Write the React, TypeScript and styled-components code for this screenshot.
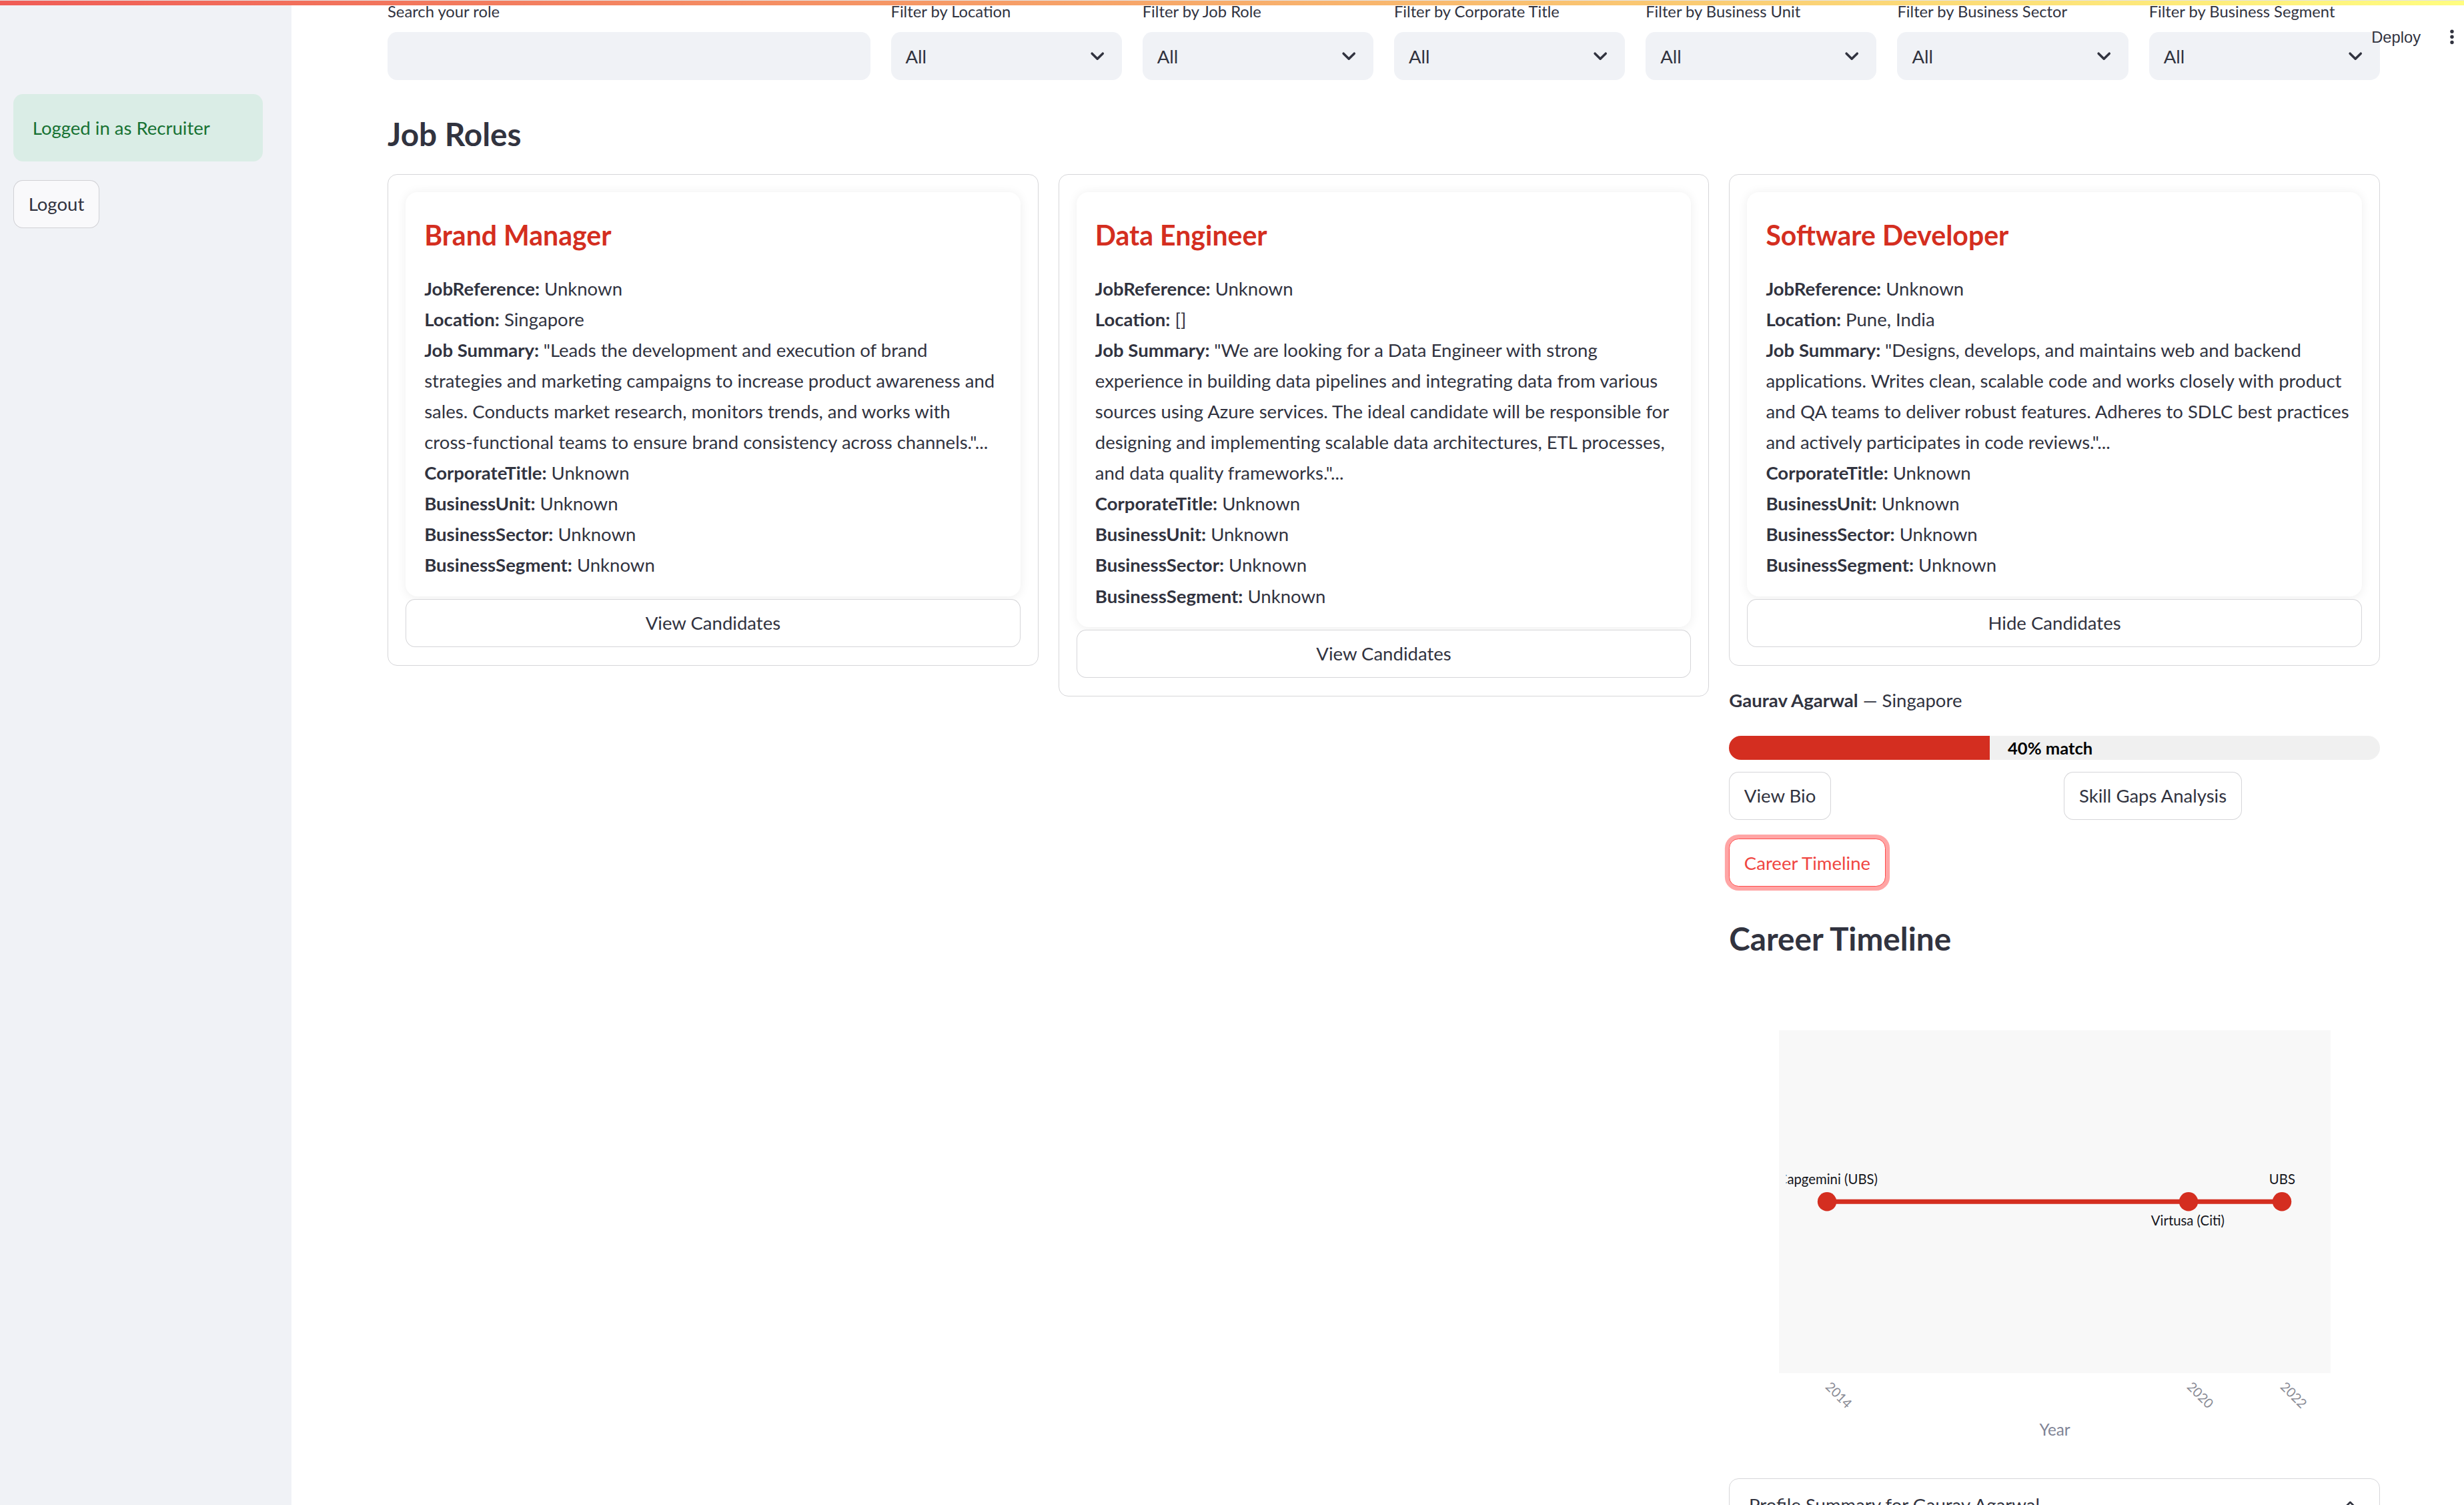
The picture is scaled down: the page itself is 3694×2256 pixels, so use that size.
import React from "react";
import styled, { createGlobalStyle } from "styled-components";
import { ChevronDown, ChevronUp } from "lucide-react";

const RED = "#d42e20";
const INK = "rgb(49, 51, 63)";

const GlobalStyle = createGlobalStyle`
  html, body { margin: 0; padding: 0; overflow: hidden; background: #ffffff; }
  body { font-family: Lato, "Liberation Sans", sans-serif; color: ${INK}; }
  *, *::before, *::after { box-sizing: border-box; }
`;

const Page = styled.div`
  zoom: 1.8;
  width: 2052.2px;
  height: 1253.3px;
  display: flex;
  position: relative;
  overflow: hidden;
  background: #ffffff;
`;

const Decoration = styled.div`
  position: absolute;
  top: 0;
  left: 0;
  right: 0;
  height: 4.4px;
  border-top: 1.1px solid #e4e4e6;
  background: linear-gradient(90deg, rgb(240, 92, 86), rgb(255, 253, 128));
  z-index: 10;
`;

const HeaderBar = styled.div`
  position: absolute;
  top: 0;
  right: 0;
  height: 62.6px;
  display: flex;
  align-items: center;
  gap: 16px;
  z-index: 5;
`;

const DeployText = styled.span`
  font-family: "Liberation Sans", Arial, sans-serif;
  font-size: 13.2px;
  color: ${INK};
`;

const Sidebar = styled.aside`
  width: 242.8px;
  flex: none;
  height: 100%;
  background: #f0f2f6;
  padding: 78.3px 24px 0 11.1px;
  display: flex;
  flex-direction: column;
  align-items: flex-start;
  gap: 15.6px;
`;

const SuccessBox = styled.div`
  align-self: stretch;
  height: 56px;
  border-radius: 8px;
  background: rgba(33, 195, 84, 0.1);
  color: rgb(23, 114, 51);
  padding: 0 16px;
  display: flex;
  align-items: center;
  font-size: 15.3px;
`;

const Button = styled.button<{ $focused?: boolean; $block?: boolean }>`
  height: 40px;
  width: ${(p) => (p.$block ? "100%" : "auto")};
  padding: 0 12px;
  border-radius: 8px;
  border: 1px solid ${(p) => (p.$focused ? "rgb(255, 75, 75)" : "rgba(49, 51, 63, 0.2)")};
  box-shadow: ${(p) => (p.$focused ? "rgba(255, 75, 75, 0.5) 0 0 0 3.4px" : "none")};
  background: #ffffff;
  color: ${(p) => (p.$focused ? "rgb(240, 70, 66)" : INK)};
  font-family: Lato, "Liberation Sans", sans-serif;
  font-size: 15.3px;
  line-height: 1;
  display: inline-flex;
  align-items: center;
  justify-content: center;
  justify-self: start;
  cursor: pointer;
`;

const LogoutButton = styled(Button)`
  background: rgb(249, 249, 251);
  width: 71.7px;
`;

const Main = styled.main`
  flex: 1;
  min-width: 0;
  padding: 0 70px 0 80px;
`;

const FilterGrid = styled.div`
  display: grid;
  grid-template-columns: repeat(8, 1fr);
  column-gap: 17.2px;
`;

const Field = styled.div<{ $wide?: boolean }>`
  grid-column: span ${(p) => (p.$wide ? 2 : 1)};
  display: flex;
  flex-direction: column;
  min-width: 0;
`;

const FieldLabel = styled.label`
  font-size: 13.2px;
  line-height: 19px;
  margin-bottom: 7.7px;
  white-space: nowrap;
  color: ${INK};
`;

const InputBox = styled.div`
  height: 40px;
  border-radius: 8px;
  background: #f0f2f6;
`;

const SelectBox = styled.div`
  height: 40px;
  border-radius: 8px;
  background: #f0f2f6;
  display: flex;
  align-items: center;
  justify-content: space-between;
  padding: 0 11.5px 0 12.2px;
  font-size: 15.3px;
`;

const Heading = styled.h3<{ $top: number; $bottom: number }>`
  margin: ${(p) => p.$top}px 0 ${(p) => p.$bottom}px;
  font-size: 26.5px;
  line-height: 31.2px;
  font-weight: 700;
  color: ${INK};
`;

const CardGrid = styled.div`
  display: grid;
  grid-template-columns: repeat(3, 1fr);
  column-gap: 16.6px;
  align-items: start;
`;

const Column = styled.div`
  display: flex;
  flex-direction: column;
  min-width: 0;
`;

const Bordered = styled.div`
  border: 1px solid rgba(49, 51, 63, 0.2);
  border-radius: 8px;
  padding: 14.5px 14.5px 15px;
  display: flex;
  flex-direction: column;
  gap: 1.9px;
`;

const JobCard = styled.div`
  background: #ffffff;
  border-radius: 10px;
  box-shadow: 0 1px 9px rgba(0, 0, 0, 0.07);
  padding: 22.8px 15.6px 13.1px;
`;

const JobTitle = styled.h4`
  margin: 0 0 18.4px;
  font-size: 22.8px;
  line-height: 26.4px;
  font-weight: 700;
  color: ${RED};
`;

const InfoLine = styled.div`
  font-size: 15.3px;
  line-height: 25.6px;
  white-space: nowrap;
  color: ${INK};
  b {
    font-weight: 700;
  }
`;

const CandidateLine = styled(InfoLine)`
  margin-top: 16.4px;
`;

const MatchTrack = styled.div`
  margin-top: 16.4px;
  height: 20px;
  border-radius: 10px;
  background: #f0f0f0;
  display: flex;
  align-items: center;
`;

const MatchFill = styled.div`
  height: 100%;
  background: ${RED};
  border-radius: 10px 0 0 10px;
`;

const MatchLabel = styled.span`
  margin-left: 15.3px;
  font-size: 14.2px;
  font-weight: 700;
  color: #000000;
`;

const ButtonRow = styled.div`
  margin-top: 10px;
  display: grid;
  grid-template-columns: 1fr 1fr;
  column-gap: 16px;
`;

const FocusRow = styled.div`
  margin-top: 16px;
  display: flex;
`;

const ChartSvg = styled.svg`
  display: block;
  margin-top: 16px;
  font-family: Lato, "Liberation Sans", sans-serif;
`;

const Expander = styled.div`
  margin-top: 15px;
  border: 1px solid rgba(49, 51, 63, 0.2);
  border-radius: 8px;
`;

const ExpanderHeader = styled.div`
  display: flex;
  align-items: center;
  justify-content: space-between;
  padding: 9px 16px;
  font-size: 15.3px;
  line-height: 25.6px;
`;

type Job = {
  title: string;
  location: string;
  summary: string[];
  action: string;
};

const jobs: Job[] = [
  {
    title: "Brand Manager",
    location: "Singapore",
    summary: [
      "\"Leads the development and execution of brand",
      "strategies and marketing campaigns to increase product awareness and",
      "sales. Conducts market research, monitors trends, and works with",
      "cross-functional teams to ensure brand consistency across channels.\"...",
    ],
    action: "View Candidates",
  },
  {
    title: "Data Engineer",
    location: "[]",
    summary: [
      "\"We are looking for a Data Engineer with strong",
      "experience in building data pipelines and integrating data from various",
      "sources using Azure services. The ideal candidate will be responsible for",
      "designing and implementing scalable data architectures, ETL processes,",
      "and data quality frameworks.\"...",
    ],
    action: "View Candidates",
  },
  {
    title: "Software Developer",
    location: "Pune, India",
    summary: [
      "\"Designs, develops, and maintains web and backend",
      "applications. Writes clean, scalable code and works closely with product",
      "and QA teams to deliver robust features. Adheres to SDLC best practices",
      "and actively participates in code reviews.\"...",
    ],
    action: "Hide Candidates",
  },
];

const filters = [
  "Filter by Location",
  "Filter by Job Role",
  "Filter by Corporate Title",
  "Filter by Business Unit",
  "Filter by Business Sector",
  "Filter by Business Segment",
];

function JobBlock({ job }: { job: Job }) {
  return (
    <Bordered>
      <JobCard>
        <JobTitle>{job.title}</JobTitle>
        <InfoLine>
          <b>JobReference:</b> Unknown
        </InfoLine>
        <InfoLine>
          <b>Location:</b> {job.location}
        </InfoLine>
        {job.summary.map((line, i) => (
          <InfoLine key={i}>
            {i === 0 && <b>Job Summary: </b>}
            {line}
          </InfoLine>
        ))}
        <InfoLine>
          <b>CorporateTitle:</b> Unknown
        </InfoLine>
        <InfoLine>
          <b>BusinessUnit:</b> Unknown
        </InfoLine>
        <InfoLine>
          <b>BusinessSector:</b> Unknown
        </InfoLine>
        <InfoLine>
          <b>BusinessSegment:</b> Unknown
        </InfoLine>
      </JobCard>
      <Button $block>{job.action}</Button>
    </Bordered>
  );
}

const points = [
  { x: 81.7, year: "2014" },
  { x: 382.8, year: "2020" },
  { x: 460.6, year: "2022" },
];

function CareerChart() {
  const plotTop = 44.6;
  const plotH = 285.6;
  const lineY = 187.4;
  const plotBottom = plotTop + plotH;
  return (
    <ChartSvg width="542.8" height="402.4" viewBox="0 0 542.8 402.4">
      <defs>
        <clipPath id="plot-clip">
          <rect x="47.6" y={plotTop} width="453.5" height={plotH} />
        </clipPath>
      </defs>
      <rect x="41.7" y={plotTop} width="459.4" height={plotH} fill="#f8f8f8" />
      <line x1={points[0].x} y1={lineY} x2={points[2].x} y2={lineY} stroke={RED} strokeWidth="3.9" />
      {points.map((p) => (
        <circle key={p.year} cx={p.x} cy={lineY} r="7.9" fill={RED} />
      ))}
      <g clipPath="url(#plot-clip)" fontSize="11.3" fill="#15161c">
        <text x="123.9" y="173" textAnchor="end">
          Capgemini (UBS)
        </text>
        <text x="460.8" y="173" textAnchor="middle">
          UBS
        </text>
        <text x="382.2" y="207.4" textAnchor="middle">
          Virtusa (Citi)
        </text>
      </g>
      {points.map((p) => (
        <text
          key={p.year + "t"}
          transform={`translate(${p.x} ${plotBottom + 10}) rotate(45)`}
          fontSize="11"
          fill="#8a8c96"
          dominantBaseline="middle"
        >
          {p.year}
        </text>
      ))}
      <text x="271.4" y="382.2" textAnchor="middle" fontSize="13.5" fill="#808495">
        Year
      </text>
    </ChartSvg>
  );
}

function MoreIcon() {
  return (
    <svg width="20" height="20" viewBox="0 0 20 20">
      <circle cx="10" cy="5.1" r="1.5" fill={INK} />
      <circle cx="10" cy="9.6" r="1.5" fill={INK} />
      <circle cx="10" cy="14.2" r="1.5" fill={INK} />
    </svg>
  );
}

export default function App() {
  const match = 40;
  return (
    <>
      <GlobalStyle />
      <Page>
        <Decoration />
        <HeaderBar>
          <DeployText>Deploy</DeployText>
          <MoreIcon />
        </HeaderBar>
        <Sidebar>
          <SuccessBox>Logged in as Recruiter</SuccessBox>
          <LogoutButton>Logout</LogoutButton>
        </Sidebar>
        <Main>
          <FilterGrid>
            <Field $wide>
              <FieldLabel>Search your role</FieldLabel>
              <InputBox />
            </Field>
            {filters.map((f) => (
              <Field key={f}>
                <FieldLabel>{f}</FieldLabel>
                <SelectBox>
                  <span>All</span>
                  <ChevronDown size={18} strokeWidth={2.6} color={INK} />
                </SelectBox>
              </Field>
            ))}
          </FilterGrid>
          <Heading $top={29.4} $bottom={17.7}>
            Job Roles
          </Heading>
          <CardGrid>
            <Column>
              <JobBlock job={jobs[0]} />
            </Column>
            <Column>
              <JobBlock job={jobs[1]} />
            </Column>
            <Column>
              <JobBlock job={jobs[2]} />
              <CandidateLine>
                <b>Gaurav Agarwal</b> — Singapore
              </CandidateLine>
              <MatchTrack>
                <MatchFill style={{ width: `${match}%` }} />
                <MatchLabel>{match}% match</MatchLabel>
              </MatchTrack>
              <ButtonRow>
                <Button>View Bio</Button>
                <Button>Skill Gaps Analysis</Button>
              </ButtonRow>
              <FocusRow>
                <Button $focused>Career Timeline</Button>
              </FocusRow>
              <Heading $top={27.7} $bottom={0}>
                Career Timeline
              </Heading>
              <CareerChart />
              <Expander>
                <ExpanderHeader>
                  <span>Profile Summary for Gaurav Agarwal</span>
                  <ChevronUp size={16} strokeWidth={2.2} color={INK} />
                </ExpanderHeader>
              </Expander>
            </Column>
          </CardGrid>
        </Main>
      </Page>
    </>
  );
}
